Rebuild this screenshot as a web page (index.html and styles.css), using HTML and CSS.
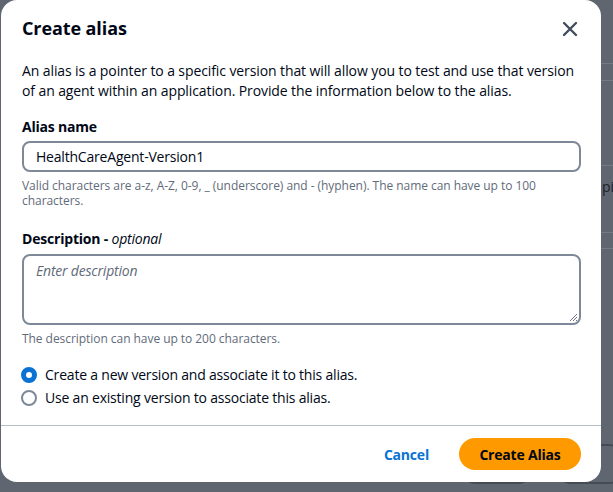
FILE: index.html
```html
<!DOCTYPE html>
<html>
<head>
<meta charset="utf-8">
<link rel="stylesheet" href="styles.css">
</head>
<body>
<div class="backdrop">
  <div class="bg-line l1"></div>
  <div class="bg-line l2"></div>
  <div class="bg-line l3"></div>
  <div class="bg-line l4"></div>
  <div class="bg-line l5"></div>
  <div class="bg-text">pi</div>
  <div class="bg-btn b1"></div>
  <div class="bg-btn b2"></div>
</div>
<div class="modal">
  <div class="header">
    <h1 class="title">Create alias</h1>
    <button class="close" aria-label="Close">
      <svg width="16" height="16" viewBox="0 0 16 16"><path d="M2 2 L14 14 M14 2 L2 14" stroke="#414d5c" stroke-width="2.4" stroke-linecap="round" fill="none"/></svg>
    </button>
  </div>
  <div class="body">
    <p class="intro">An alias is a pointer to a specific version that will allow you to test and use that version of an agent within an application. Provide the information below to the alias.</p>
    <div class="field">
      <label class="label">Alias name</label>
      <div class="input">HealthCareAgent-Version1</div>
      <div class="hint">Valid characters are a-z, A-Z, 0-9, _ (underscore) and - (hyphen). The name can have up to 100 characters.</div>
    </div>
    <div class="field field2">
      <label class="label">Description - <i class="opt">optional</i></label>
      <div class="textarea"><span class="ph">Enter description</span>
        <svg class="grip" width="9" height="9" viewBox="0 0 9 9"><path d="M8 1 L1 8 M8 4 L4 8 M8 7 L7 8" stroke="#6b7280" stroke-width="1" fill="none"/></svg>
      </div>
      <div class="hint">The description can have up to 200 characters.</div>
    </div>
    <div class="radios">
      <div class="radio"><span class="dot on"></span><span>Create a new version and associate it to this alias.</span></div>
      <div class="radio"><span class="dot"></span><span>Use an existing version to associate this alias.</span></div>
    </div>
  </div>
  <div class="footer">
    <a class="cancel">Cancel</a>
    <button class="primary">Create Alias</button>
  </div>
</div>
</body>
</html>
```
FILE: styles.css
```css
html, body {
  margin: 0;
  padding: 0;
  width: 613px;
  height: 492px;
  overflow: hidden;
}
body {
  background: #5f6670;
  font-family: "Open Sans", "Noto Sans", sans-serif;
  color: #000716;
  position: relative;
}
.backdrop {
  position: absolute;
  inset: 0;
}
.bg-line {
  position: absolute;
  left: 601px;
  right: 0;
  height: 1px;
  background: #737a85;
}
.l1 { top: 63px; }
.l2 { top: 80px; }
.l3 { top: 165px; }
.l4 { top: 232px; }
.l5 { top: 248px; }
.bg-text {
  position: absolute;
  left: 602px;
  top: 177px;
  font-size: 14px;
  color: #1b1f26;
}
.bg-btn {
  position: absolute;
  top: 444px;
  height: 40px;
  box-sizing: border-box;
  border: 2px solid #454b54;
  border-radius: 16px;
}
.b1 { left: 460px; width: 74px; }
.b2 { left: 555px; width: 70px; }
.modal {
  position: absolute;
  left: 1px;
  top: 0;
  width: 600px;
  height: 482px;
  background: #fff;
  border-radius: 16px;
  display: flex;
  flex-direction: column;
  box-sizing: border-box;
}
.header {
  display: flex;
  align-items: center;
  justify-content: space-between;
  padding: 15px 23px 0 21px;
  height: 26px;
}
.title {
  margin: 0;
  font-size: 18px;
  font-weight: 700;
  line-height: 26px;
  letter-spacing: -0.1px;
}
.close {
  border: 0;
  background: none;
  padding: 0;
  width: 16px;
  height: 16px;
  display: flex;
  margin-top: 2px;
}
.body {
  padding: 20px 20px 0 21px;
  flex: 1;
}
.intro {
  margin: 0;
  font-size: 14px;
  line-height: 20px;
  letter-spacing: -0.1px;
}
.field {
  margin-top: 16px;
}
.field2 {
  margin-top: 21px;
}
.label {
  display: block;
  font-size: 14px;
  font-weight: 700;
  line-height: 20px;
  letter-spacing: -0.2px;
}
.opt {
  font-weight: 400;
}
.input {
  margin-top: 4px;
  height: 31px;
  box-sizing: border-box;
  border: 2px solid #7d8998;
  border-radius: 8px;
  padding: 0 12px;
  display: flex;
  align-items: center;
  font-size: 14px;
  letter-spacing: -0.2px;
}
.hint {
  margin-top: 6px;
  font-size: 12px;
  line-height: 15px;
  color: #5f6b7a;
  letter-spacing: -0.05px;
}
.textarea {
  position: relative;
  margin-top: 5px;
  height: 71px;
  box-sizing: border-box;
  border: 2px solid #7d8998;
  border-radius: 8px;
  padding: 5px 12px;
  font-size: 14px;
  line-height: 20px;
}
.ph {
  font-style: italic;
  color: #5f6b7a;
  letter-spacing: -0.2px;
}
.grip {
  position: absolute;
  right: 1px;
  bottom: 1px;
}
.radios {
  margin-top: 19px;
  display: flex;
  flex-direction: column;
  gap: 3px;
}
.radio {
  display: flex;
  align-items: center;
  gap: 8px;
  font-size: 14px;
  line-height: 20px;
  letter-spacing: -0.2px;
}
.dot {
  width: 16px;
  height: 16px;
  box-sizing: border-box;
  border: 2px solid #7d8998;
  border-radius: 50%;
  margin-left: -1px;
}
.dot.on {
  border: 5px solid #0972d3;
  background: #fff;
}
.footer {
  border-top: 1px solid #b4bcc6;
  height: 56px;
  display: flex;
  align-items: center;
  justify-content: flex-end;
  padding: 0 20px 0 0;
  gap: 30px;
}
.cancel {
  color: #0972d3;
  font-weight: 700;
  font-size: 14px;
  letter-spacing: -0.2px;
}
.primary {
  border: 0;
  background: #ff9900;
  color: #000716;
  font-family: inherit;
  font-weight: 700;
  font-size: 14px;
  height: 32px;
  width: 122px;
  border-radius: 16px;
  letter-spacing: -0.2px;
}
```
